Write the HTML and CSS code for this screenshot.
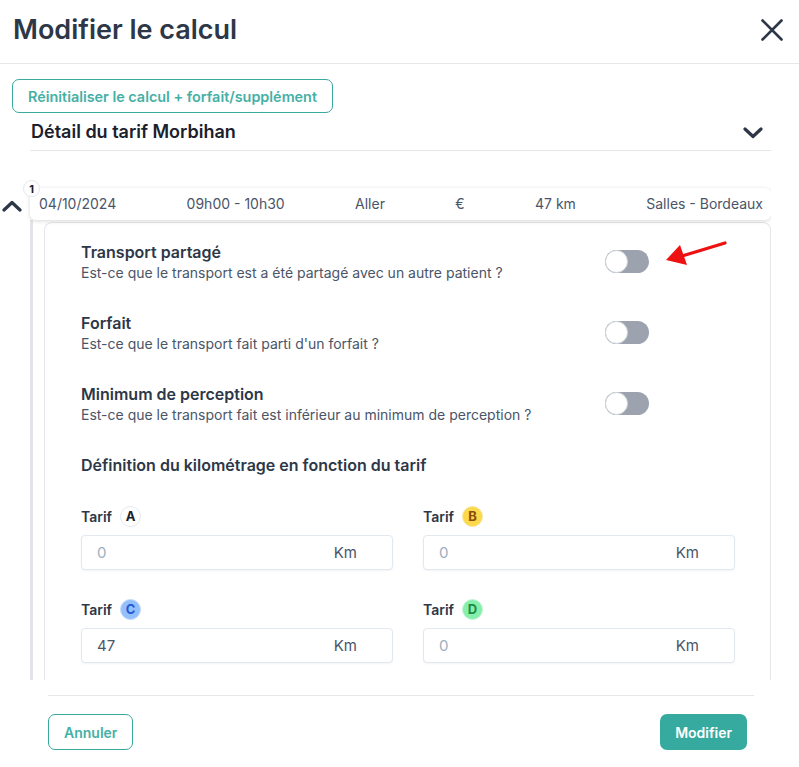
FILE: index.html
```html
<!DOCTYPE html>
<html lang="fr">
<head>
<meta charset="utf-8">
<title>Modifier le calcul</title>
<link rel="stylesheet" href="styles.css">
</head>
<body>
<div class="modal">
  <header class="modal-header">
    <h1 class="modal-title">Modifier le calcul</h1>
    <button class="close-btn" aria-label="Fermer">
      <svg width="22" height="22" viewBox="0 0 22 22"><path d="M1.5 1.5 L20.5 20.5 M20.5 1.5 L1.5 20.5" stroke="#2d3748" stroke-width="2.6" stroke-linecap="round" fill="none"/></svg>
    </button>
  </header>

  <div class="modal-body">
    <button class="btn-outline btn-reset">Réinitialiser le calcul + forfait/supplément</button>

    <div class="tarif-head">
      <span class="tarif-title">Détail du tarif Morbihan</span>
      <svg class="chev" width="20" height="12" viewBox="0 0 20 12"><path d="M2 2 L10 9.5 L18 2" stroke="#2d3748" stroke-width="3.2" stroke-linecap="round" stroke-linejoin="round" fill="none"/></svg>
    </div>

    <div class="scroll">
      <div class="trip-grid">
        <div class="chev-cell">
          <svg width="20" height="12" viewBox="0 0 20 12"><path d="M2 10 L10 2.5 L18 10" stroke="#2d3748" stroke-width="3.2" stroke-linecap="round" stroke-linejoin="round" fill="none"/></svg>
        </div>
        <div class="trip-row">
          <span class="trip-badge">1</span>
          <span>04/10/2024</span>
          <span>09h00 - 10h30</span>
          <span>Aller</span>
          <span>€</span>
          <span>47 km</span>
          <span>Salles - Bordeaux</span>
        </div>
        <div></div>
        <div class="detail-wrap">
          <div class="detail-card">
            <div class="option">
              <div class="option-text">
                <div class="option-title">Transport partagé</div>
                <div class="option-desc">Est-ce que le transport est a été partagé avec un autre patient ?</div>
              </div>
              <span class="toggle"><span class="knob"></span></span>
            </div>
            <div class="option">
              <div class="option-text">
                <div class="option-title">Forfait</div>
                <div class="option-desc">Est-ce que le transport fait parti d'un forfait ?</div>
              </div>
              <span class="toggle"><span class="knob"></span></span>
            </div>
            <div class="option">
              <div class="option-text">
                <div class="option-title">Minimum de perception</div>
                <div class="option-desc">Est-ce que le transport fait est inférieur au minimum de perception ?</div>
              </div>
              <span class="toggle"><span class="knob"></span></span>
            </div>

            <div class="section-title">Définition du kilométrage en fonction du tarif</div>

            <div class="km-grid">
              <div class="km-field">
                <div class="km-label">Tarif <span class="tb tb-a">A</span></div>
                <div class="km-input"><input type="text" placeholder="0"><span class="unit">Km</span></div>
              </div>
              <div class="km-field">
                <div class="km-label">Tarif <span class="tb tb-b">B</span></div>
                <div class="km-input"><input type="text" placeholder="0"><span class="unit">Km</span></div>
              </div>
              <div class="km-field">
                <div class="km-label">Tarif <span class="tb tb-c">C</span></div>
                <div class="km-input"><input type="text" value="47"><span class="unit">Km</span></div>
              </div>
              <div class="km-field">
                <div class="km-label">Tarif <span class="tb tb-d">D</span></div>
                <div class="km-input"><input type="text" placeholder="0"><span class="unit">Km</span></div>
              </div>
            </div>
          </div>
        </div>
      </div>
    </div>
  </div>

  <footer class="modal-footer">
    <button class="btn-outline btn-cancel">Annuler</button>
    <button class="btn-primary">Modifier</button>
  </footer>

  <svg class="annot-arrow" width="70" height="40" viewBox="0 0 70 40"><path d="M65 5 L22 18" stroke="#ee1111" stroke-width="3.2" stroke-linecap="round" fill="none"/><polygon points="6,22 20,7 27,27" fill="#ee1111"/></svg>
</div>
</body>
</html>
```

FILE: styles.css
```css
* { box-sizing: border-box; }

body {
  margin: 0;
  background: #ffffff;
  font-family: Inter, "Noto Sans", "Liberation Sans", sans-serif;
  color: #2d3748;
}

.modal {
  position: relative;
  width: 799px;
  height: 767px;
  overflow: hidden;
  background: #fff;
}

.modal-header {
  height: 64px;
  display: flex;
  align-items: center;
  justify-content: space-between;
  padding: 0 16px 0 13px;
  border-bottom: 1px solid #e5e7eb;
}

.modal-title {
  margin: 0;
  font-size: 27px;
  font-weight: 600;
  color: #2d3748;
  padding-bottom: 4px;
}

.close-btn {
  background: none;
  border: 0;
  padding: 0;
  width: 22px;
  height: 22px;
  display: flex;
  margin-bottom: 4px;
}

.modal-body {
  padding-top: 15px;
}

.btn-outline {
  font-family: inherit;
  background: #fff;
  border: 1px solid #3aa99e;
  color: #45b0a5;
  font-size: 14px;
  font-weight: 600;
  border-radius: 7px;
  cursor: pointer;
}

.btn-reset {
  margin-left: 12px;
  height: 34px;
  padding: 0 15px;
  font-size: 14.4px;
}

.tarif-head {
  margin: 0 28px 0 30px;
  height: 38px;
  border-bottom: 1px solid #e5e7eb;
  display: flex;
  align-items: center;
  justify-content: space-between;
  padding: 0 8px 0 1px;
}

.tarif-title {
  font-size: 18px;
  font-weight: 600;
  color: #1a202c;
}

.chev { margin-top: 2px; }

.scroll {
  height: 529px;
  overflow: hidden;
  margin-right: 28px;
  padding-top: 37px;
}

.trip-grid {
  display: grid;
  grid-template-columns: 30px minmax(0, 1fr);
}

.chev-cell {
  display: flex;
  align-items: center;
  padding-left: 2px;
  padding-top: 3px;
}

.trip-row {
  position: relative;
  height: 32px;
  display: flex;
  align-items: center;
  justify-content: space-between;
  padding: 0 8px 1px 9px;
  background: #fff;
  border-radius: 6px;
  box-shadow: 0 1px 4px rgba(0, 0, 0, 0.16);
  font-size: 14px;
  color: #4a5568;
}

.trip-badge {
  position: absolute;
  left: -7px;
  top: -8px;
  width: 17px;
  height: 17px;
  border-radius: 50%;
  background: #fff;
  border: 1px solid #e2e8f0;
  font-size: 11px;
  font-weight: 700;
  color: #1a202c;
  display: flex;
  align-items: center;
  justify-content: center;
}

.detail-wrap {
  border-left: 3px solid #e3e4ea;
  padding: 2px 0 0 11px;
}

.detail-card {
  border: 1px solid #e5e7eb;
  border-bottom: 0;
  border-radius: 8px 8px 0 0;
  padding: 19px 35px 40px 36px;
  min-height: 600px;
}

.option {
  display: flex;
  justify-content: space-between;
  align-items: flex-start;
  margin-right: 86px;
  margin-bottom: 30px;
}

.option-title {
  font-size: 16px;
  line-height: 21px;
  font-weight: 600;
  color: #2d3748;
}

.option-desc {
  font-size: 14px;
  line-height: 20px;
  color: #4a5568;
}

.toggle {
  margin-top: 8px;
  width: 44px;
  height: 23px;
  border-radius: 12px;
  background: #9ca3af;
  display: flex;
  align-items: center;
  flex-shrink: 0;
}

.knob {
  width: 23px;
  height: 23px;
  border-radius: 50%;
  background: #fff;
  border: 1px solid #d1d5db;
}

.section-title {
  font-size: 16px;
  line-height: 20px;
  font-weight: 600;
  color: #2d3748;
  margin-top: 1px;
  margin-bottom: 30px;
}

.km-grid {
  display: grid;
  grid-template-columns: repeat(2, minmax(0, 1fr));
  column-gap: 30px;
  row-gap: 28px;
}

.km-label {
  height: 22px;
  display: flex;
  align-items: center;
  font-size: 14px;
  font-weight: 600;
  color: #2d3748;
  margin-bottom: 8px;
}

.tb {
  margin-left: 8px;
  width: 21px;
  height: 21px;
  border-radius: 50%;
  display: inline-flex;
  align-items: center;
  justify-content: center;
  font-size: 13px;
  font-weight: 700;
}

.tb-a { background: #fff; border: 1px solid #e2e8f0; color: #1a202c; }
.tb-b { background: #fcd94a; border: 1px solid #f5e6a8; color: #8a4b0b; }
.tb-c { background: #93c0fb; border: 1px solid #c3dafc; color: #2457d6; }
.tb-d { background: #86efac; border: 1px solid #c6f3d6; color: #1e8a45; }

.km-input {
  height: 35px;
  display: flex;
  align-items: center;
  border: 1px solid #e2e8f0;
  border-radius: 4px;
  box-shadow: 0 1px 2px rgba(0, 0, 0, 0.05);
  padding: 0 35px 0 15px;
  background: #fff;
}

.km-input input {
  flex: 1;
  width: 0;
  min-width: 0;
  border: 0;
  outline: none;
  padding: 0;
  font-family: inherit;
  font-size: 15px;
  color: #4a5568;
  background: transparent;
}

.km-input input::placeholder { color: #a0aec0; }

.unit {
  font-size: 15px;
  color: #4a5568;
}

.modal-footer {
  margin: 15px 45px 0 48px;
  border-top: 1px solid #e5e7eb;
  padding: 18px 7px 0 0;
  display: flex;
  justify-content: space-between;
}

.btn-cancel {
  height: 36px;
  padding: 0 15px;
}

.btn-primary {
  font-family: inherit;
  height: 36px;
  padding: 0 15px;
  background: #37aa9f;
  color: #fff;
  border: 0;
  border-radius: 7px;
  font-size: 14px;
  font-weight: 600;
}

.annot-arrow {
  position: absolute;
  left: 660px;
  top: 238px;
}
```
